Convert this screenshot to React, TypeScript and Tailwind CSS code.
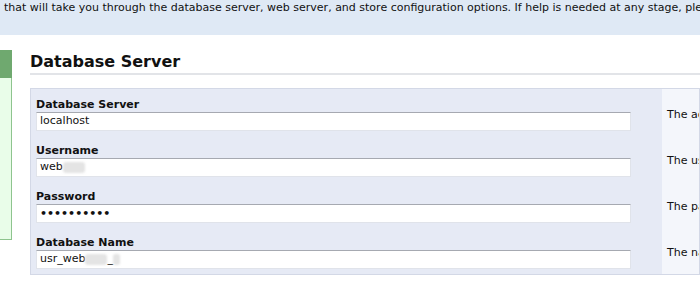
import React from "react";

const fields = [
  { label: "Database Server", value: "localhost", help: "The address of the database server" },
  { label: "Username", value: "web", blur: true, help: "The username for the database" },
  { label: "Password", value: "••••••••••", help: "The password for the database" },
  { label: "Database Name", value: "usr_web", blur: true, tail: true, help: "The name of the database" },
];

const App: React.FC = () => {
  return (
    <div
      className="w-[700px] h-[300px] overflow-hidden bg-white text-[#111] text-[11px]"
      style={{ fontFamily: '"DejaVu Sans", Verdana, sans-serif' }}
    >
      {/* Intro banner */}
      <div className="h-[35px] bg-[#dfe9f5] pl-[4px] pt-[1px] whitespace-nowrap leading-[14px] overflow-hidden">
        that will take you through the database server, web server, and store configuration options. If help is needed at any stage, please
      </div>

      <div className="flex">
        {/* Left step panel */}
        <div className="w-[12px] mt-[15px] shrink-0">
          <div className="h-[28px] bg-[#6fa96f]" />
          <div className="h-[162px] bg-[#e9fde9] border-r border-b border-[#8ec48e]" />
        </div>

        {/* Main content */}
        <div className="flex-1 ml-[18px] overflow-hidden">
          <h2 className="mt-[17px] text-[16px] font-bold leading-[20px] pb-[1px] border-b-2 border-[#e2e4e8] whitespace-nowrap">
            Database Server
          </h2>

          <div className="mt-[13px] flex bg-[#e6eaf5] border border-[#d3d8e6] h-[187px]">
            <div className="w-[631px] pl-[5px] pt-[9px] shrink-0">
              {fields.map((f) => (
                <div key={f.label} className="h-[46px]">
                  <div className="font-bold leading-[14px] whitespace-nowrap">{f.label}</div>
                  <div className="w-[595px] h-[19px] bg-white border border-[#e0e3ea] border-t-[#a6a9b1] flex items-center pl-[3px] whitespace-nowrap overflow-hidden">
                    {f.label === "Password" ? (
                      <span className="font-bold leading-none">{f.value}</span>
                    ) : (
                      <>
                        <span>{f.value}</span>
                        {f.blur && <span className="inline-block w-[22px] h-[11px] bg-[#e4e4e4] rounded-[3px] blur-[1px]" />}
                        {f.tail && (
                          <>
                            <span>_</span>
                            <span className="inline-block w-[7px] h-[11px] bg-[#e4e4e4] rounded-[2px] blur-[1px]" />
                          </>
                        )}
                      </>
                    )}
                  </div>
                </div>
              ))}
            </div>
            <div className="flex-1 bg-[#f4f6fb] pl-[5px] pt-[19px] overflow-hidden">
              {fields.map((f) => (
                <div key={f.label} className="h-[46px] whitespace-nowrap leading-[14px]">
                  {f.help}
                </div>
              ))}
            </div>
          </div>
        </div>
      </div>
    </div>
  );
};

export default App;
